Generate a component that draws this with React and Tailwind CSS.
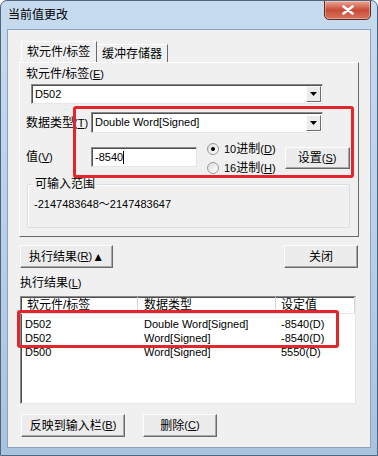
import React from 'react';

const font = "font-['Tahoma','Liberation_Sans','Noto_Sans_CJK_SC',sans-serif]";

// latin runs are a touch smaller than the CJK glyphs
const Lt = ({ children }) => <span className="text-[11px]">{children}</span>;

const Key = ({ k }) => (
  <span className="text-[11px]">
    (<u>{k}</u>)
  </span>
);

// classic raised button
const Button = ({ className = '', children }) => (
  <div
    className={`flex items-center justify-center bg-[#ececec] border border-t-[#fdfdfd] border-l-[#fdfdfd] border-r-[#696969] border-b-[#696969] shadow-[inset_-1px_-1px_0_#a9a9a9] text-[12px] text-black ${className}`}
  >
    {children}
  </div>
);

const Combo = ({ value, className = '' }) => (
  <div
    className={`flex items-center bg-white border border-t-[#8a8a8a] border-l-[#8a8a8a] border-r-[#e6e6e6] border-b-[#e6e6e6] shadow-[inset_1px_1px_0_#505050] ${className}`}
  >
    <span className="flex-1 pl-[3px] text-[11px] leading-none text-black">{value}</span>
    <div className="w-[15px] h-[16px] mr-[1px] flex items-center justify-center bg-[#ececec] border border-t-[#fdfdfd] border-l-[#fdfdfd] border-r-[#6d6d6d] border-b-[#6d6d6d]">
      <svg width="7" height="4" viewBox="0 0 7 4">
        <path d="M0 0h7L3.5 4z" fill="#000" />
      </svg>
    </div>
  </div>
);

const Radio = ({ checked, label }) => (
  <div className="flex items-center h-[19px]">
    <div className="w-[12px] h-[12px] rounded-full bg-gradient-to-br from-[#dcdcdc] to-white border border-[#9a9a9a] flex items-center justify-center">
      {checked && <div className="w-[4px] h-[4px] rounded-full bg-black" />}
    </div>
    <span className="ml-[5px] text-[12px]">{label}</span>
  </div>
);

const rows = [
  ['D502', 'Double Word[Signed]', '-8540(D)'],
  ['D502', 'Word[Signed]', '-8540(D)'],
  ['D500', 'Word[Signed]', '5550(D)'],
];

export default function App() {
  return (
    <div
      className={`relative w-[378px] h-[456px] overflow-hidden rounded-t-[7px] border border-[#4e6580] bg-gradient-to-b from-[#c7dbef] via-[#b9d0e8] to-[#a9c3df] flex flex-col ${font} text-black`}
    >
      {/* title bar */}
      <div className="h-[28px] flex items-center pl-[7px] text-[12px] text-black shrink-0">
        当前值更改
      </div>
      <div className="absolute top-[-1px] right-[6px] w-[47px] h-[20px] rounded-b-[5px] border border-[#5d2a24] bg-gradient-to-b from-[#e9a897] via-[#c94a36] to-[#d9735f] flex items-center justify-center shadow-[inset_0_0_0_1px_rgba(255,255,255,0.35)]">
        <svg width="12" height="10" viewBox="0 0 12 10">
          <path d="M1.5 1.5l9 7M10.5 1.5l-9 7" stroke="#fff" strokeWidth="2.6" strokeLinecap="round" />
        </svg>
      </div>

      {/* client area */}
      <div className="mx-[6px] mb-[7px] h-[419px] border border-[#8ea2ba] bg-[#f0f0f0]">
        {/* tabs */}
        <div className="flex items-end ml-[13px] mt-[11px] h-[21px]">
          <div className="h-[21px] w-[76px] relative z-10 bg-[#f0f0f0] border border-b-0 border-t-white border-l-white border-r-[#696969] flex items-center pl-[5px] text-[12px]">
            软元件/标签
          </div>
          <div className="h-[18px] w-[71px] border border-b-0 border-t-white border-r-[#696969] border-l-0 flex items-center pl-[5px] text-[12px]">
            缓冲存储器
          </div>
        </div>

        {/* tab panel */}
        <div className="ml-[11px] w-[340px] h-[175px] border border-t-white border-l-white border-r-[#696969] border-b-[#696969] flex flex-col">
          <div className="ml-[6px] mt-[4px] h-[14px] flex items-center text-[12px]">
            软元件/标签<Key k="E" />
          </div>
          <Combo value="D502" className="ml-[11px] mt-[3px] w-[292px] h-[20px]" />

          <div className="flex items-center mt-[8px] h-[21px]">
            <span className="ml-[6px] w-[65px] text-[12px]">
              数据类型<Key k="T" />
            </span>
            <Combo value="Double Word[Signed]" className="w-[232px] h-[21px]" />
          </div>

          <div className="flex items-start mt-[8px] h-[32px]">
            <span className="ml-[6px] mt-[7px] w-[65px] text-[12px]">
              值<Key k="V" />
            </span>
            <div className="mt-[6px] w-[106px] h-[20px] bg-white border border-t-[#8a8a8a] border-l-[#8a8a8a] border-r-[#e6e6e6] border-b-[#e6e6e6] shadow-[inset_1px_1px_0_#505050] flex items-center pl-[3px] text-[11px]">
              -8540<span className="w-px h-[13px] bg-black" />
            </div>
            <div className="ml-[10px] -mt-[2px] flex flex-col">
              <Radio checked label={<><Lt>10</Lt>进制<Key k="D" /></>} />
              <Radio label={<><Lt>16</Lt>进制<Key k="H" /></>} />
            </div>
            <Button className="ml-[9px] mt-[6px] w-[65px] h-[22px]">
              设置<Key k="S" />
            </Button>
          </div>

          {/* group box */}
          <div className="relative ml-[7px] mt-[11px] w-[323px] h-[44px] border border-[#d5dfe5] rounded-[2px] shadow-[inset_1px_1px_0_#fff]">
            <span className="absolute left-[5px] -top-[8px] px-[2px] bg-[#f0f0f0] text-[12px] leading-[14px]">
              可输入范围
            </span>
            <div className="mt-[12px] ml-[6px] text-[11px] leading-[14px]">-2147483648～2147483647</div>
          </div>
        </div>

        {/* result buttons */}
        <div className="flex mt-[8px] ml-[12px] w-[338px] justify-between">
          <Button className="w-[93px] h-[23px]">
            执行结果<Key k="R" />▲
          </Button>
          <Button className="w-[74px] h-[23px]">关闭</Button>
        </div>

        <div className="ml-[12px] mt-[8px] h-[14px] flex items-center text-[12px]">
          执行结果<Key k="L" />
        </div>

        {/* list view */}
        <div className="ml-[12px] mt-[6px] w-[336px] h-[108px] bg-white border border-t-[#8a8a8a] border-l-[#8a8a8a] border-r-[#e6e6e6] border-b-[#e6e6e6] shadow-[inset_1px_1px_0_#505050] text-[12px]">
          <div className="flex h-[17px] border-b border-[#e5e5e5]">
            <div className="w-[117px] pl-[6px] border-r border-[#d5d5d5] flex items-center">软元件/标签</div>
            <div className="w-[138px] pl-[6px] border-r border-[#d5d5d5] flex items-center">数据类型</div>
            <div className="w-[79px] pl-[5px] border-r border-[#d5d5d5] flex items-center">设定值</div>
          </div>
          <div className="mt-[3px] text-[11px]">
            {rows.map((r, i) => (
              <div key={i} className="flex h-[14px] items-center leading-none">
                <div className="w-[117px] pl-[4px]">{r[0]}</div>
                <div className="w-[138px] pl-[6px]">{r[1]}</div>
                <div className="w-[79px] pl-[5px]">{r[2]}</div>
              </div>
            ))}
          </div>
        </div>

        {/* bottom buttons */}
        <div className="flex ml-[13px] mt-[10px] gap-[18px]">
          <Button className="w-[104px] h-[23px]">
            反映到输入栏<Key k="B" />
          </Button>
          <Button className="w-[74px] h-[23px]">
            删除<Key k="C" />
          </Button>
        </div>
      </div>

      {/* red highlight boxes */}
      <div className="absolute left-[72px] top-[105px] w-[281px] h-[72px] border-[3px] border-[#e3262b] rounded-[3px]" />
      <div className="absolute left-[16px] top-[309px] w-[322px] h-[38px] border-[3px] border-[#e3262b] rounded-[3px]" />
    </div>
  );
}
